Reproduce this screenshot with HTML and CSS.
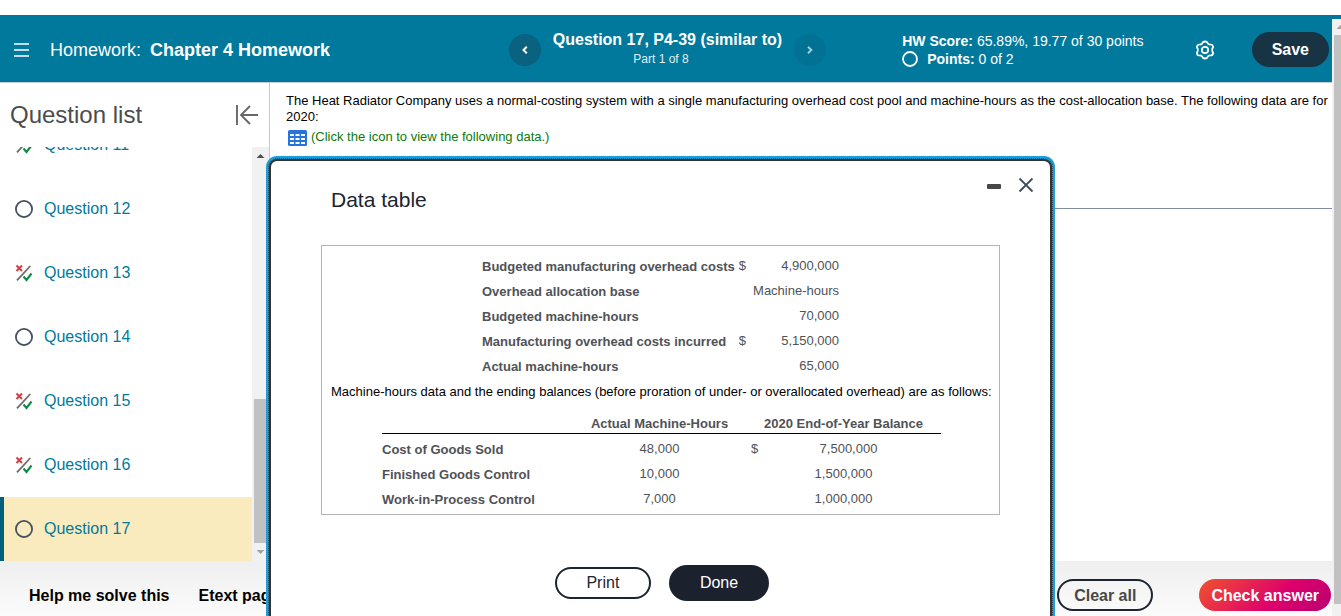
FILE: index.html
```
<!DOCTYPE html>
<html lang="en">
<head>
<meta charset="utf-8">
<title>Chapter 4 Homework</title>
<link rel="stylesheet" href="styles.css">
</head>
<body>
<svg class="sprite" aria-hidden="true">
  <symbol id="partial" viewBox="0 0 18 18">
    <path d="M1.500 1.500l5.500 5.500M7 1.500L1.500 7" stroke="#cc444a" stroke-width="2.100"/>
    <path d="M2 16.300L15.300 2" stroke="#6d6d6d" stroke-width="1.800"/>
    <path d="M8.500 12.500l3 3.500 5-6.500" fill="none" stroke="#118a45" stroke-width="2.100"/>
  </symbol>
  <symbol id="open" viewBox="0 0 18 18">
    <circle cx="9" cy="9" r="8.100" fill="none" stroke="#45505f" stroke-width="1.800"/>
  </symbol>
</svg>

<header class="topbar">
  <div class="topbar-left">
    <button class="icon-btn menu-btn" aria-label="Menu">
      <svg width="15" height="14" viewBox="0 0 15 14"><path d="M0 1h15M0 7h15M0 13h15" stroke="#fff" stroke-width="1.700"/></svg>
    </button>
    <h1 class="assignment">Homework: <strong>Chapter 4 Homework</strong></h1>
  </div>
  <nav class="question-nav">
    <button class="round-btn" aria-label="Previous question">
      <svg width="8" height="10" viewBox="0 0 8 10"><path d="M5.800 1.800L2.500 5l3.300 3.200" fill="none" stroke="#fff" stroke-width="2"/></svg>
    </button>
    <div class="question-title">
      <h2>Question 17, P4-39 (similar to)</h2>
      <p>Part 1 of 8</p>
    </div>
    <button class="round-btn round-btn-dim" aria-label="Next question">
      <svg width="8" height="10" viewBox="0 0 8 10"><path d="M2 1.800L5.300 5 2 8.200" fill="none" stroke="#a5cddc" stroke-width="1.900"/></svg>
    </button>
  </nav>
  <div class="topbar-right">
    <div class="score">
      <p><strong>HW Score:</strong> 65.89%, 19.77 of 30 points</p>
      <p class="points"><svg width="16" height="16" viewBox="0 0 16 16"><circle cx="8" cy="8" r="7" fill="none" stroke="#fff" stroke-width="1.800"/></svg><span><strong>Points:</strong> 0 of 2</span></p>
    </div>
    <button class="icon-btn settings-btn" aria-label="Settings">
      <svg width="20" height="20" viewBox="0 0 20 20" fill="none" stroke="#fff" stroke-width="1.700" stroke-linejoin="round"><path d="M7.600 2.500Q10 .5 12.400 2.500L13 3.800 14.600 4.600Q17.600 4 18.200 7L17.200 9V11L18.200 13Q17.600 16 14.600 15.400L13 16.200 12.400 17.500Q10 19.500 7.600 17.500L7 16.200 5.400 15.400Q2.400 16 1.800 13L2.800 11V9L1.800 7Q2.400 4 5.400 4.600L7 3.800Z"/><circle cx="10" cy="10" r="3.200"/></svg>
    </button>
    <button class="save-btn">Save</button>
  </div>
</header>

<div class="workspace">
  <aside class="sidebar">
    <div class="sidebar-head">
      <h2>Question list</h2>
      <button class="icon-btn" aria-label="Collapse question list">
        <svg width="24" height="22" viewBox="0 0 24 22"><path d="M2 1v20M23 11H6M15 2l-9 9 9 9" fill="none" stroke="#686868" stroke-width="1.900"/></svg>
      </button>
    </div>
    <div class="sidebar-body">
      <ul class="questions">
        <li><svg><use href="#partial"/></svg><a href="#q11">Question 11</a></li>
        <li><svg><use href="#open"/></svg><a href="#q12">Question 12</a></li>
        <li><svg><use href="#partial"/></svg><a href="#q13">Question 13</a></li>
        <li><svg><use href="#open"/></svg><a href="#q14">Question 14</a></li>
        <li><svg><use href="#partial"/></svg><a href="#q15">Question 15</a></li>
        <li><svg><use href="#partial"/></svg><a href="#q16">Question 16</a></li>
        <li class="current"><svg><use href="#open"/></svg><a href="#q17">Question 17</a></li>
      </ul>
      <div class="scrollbar" aria-hidden="true">
        <span class="arrow arrow-up"></span>
        <span class="track"><span class="thumb"></span></span>
        <span class="arrow arrow-down"></span>
      </div>
    </div>
  </aside>

  <main class="problem">
    <p>The Heat Radiator Company uses a normal-costing system with a single manufacturing overhead cost pool and machine-hours as the cost-allocation base. The following data are for 2020:</p>
    <a class="data-link" href="#data">
      <svg width="19" height="16" viewBox="0 0 19 16"><rect width="19" height="16" rx="1.500" fill="#2674d9"/><path d="M2 4h4v2H2zM7.500 4h4v2h-4zM13 4h4v2h-4zM2 8h4v2H2zM7.500 8h4v2h-4zM13 8h4v2h-4zM2 12h4v2H2zM7.500 12h4v2h-4zM13 12h4v2h-4z" fill="#fff"/></svg>
      <span>(Click the icon to view the following data.)</span>
    </a>
    <hr>
  </main>
</div>

<footer class="actions">
  <div class="help-links">
    <button class="text-btn">Help me solve this</button>
    <button class="text-btn">Etext pages</button>
  </div>
  <button class="clear-btn">Clear all</button>
  <button class="check-btn">Check answer</button>
</footer>

<section class="dialog" role="dialog" aria-labelledby="dialog-title">
  <div class="dialog-head">
    <h2 id="dialog-title">Data table</h2>
    <div class="dialog-tools">
      <button class="icon-btn" aria-label="Minimize"><svg width="14" height="16" viewBox="0 0 14 16"><rect y="7" width="14" height="5" rx="1" fill="#484848"/></svg></button>
      <button class="icon-btn" aria-label="Close"><svg width="16" height="16" viewBox="0 0 16 16"><path d="M1.500 1.500l13 13M14.500 1.500l-13 13" stroke="#3f4c5c" stroke-width="1.800"/></svg></button>
    </div>
  </div>
  <div class="data-box">
    <table class="costs">
      <tr><th scope="row">Budgeted manufacturing overhead costs</th><td class="currency">$</td><td>4,900,000</td></tr>
      <tr><th scope="row">Overhead allocation base</th><td></td><td>Machine-hours</td></tr>
      <tr><th scope="row">Budgeted machine-hours</th><td></td><td>70,000</td></tr>
      <tr><th scope="row">Manufacturing overhead costs incurred</th><td class="currency">$</td><td>5,150,000</td></tr>
      <tr><th scope="row">Actual machine-hours</th><td></td><td>65,000</td></tr>
    </table>
    <p>Machine-hours data and the ending balances (before proration of under- or overallocated overhead) are as follows:</p>
    <table class="balances">
      <colgroup><col class="col-account"><col class="col-hours"><col class="col-currency"><col></colgroup>
      <thead>
        <tr><td></td><th scope="col">Actual Machine-Hours</th><th scope="col" colspan="2">2020 End-of-Year Balance</th></tr>
      </thead>
      <tbody>
        <tr><th scope="row">Cost of Goods Sold</th><td>48,000</td><td class="currency">$</td><td>7,500,000</td></tr>
        <tr><th scope="row">Finished Goods Control</th><td>10,000</td><td colspan="2">1,500,000</td></tr>
        <tr><th scope="row">Work-in-Process Control</th><td>7,000</td><td colspan="2">1,000,000</td></tr>
      </tbody>
    </table>
  </div>
  <div class="dialog-actions">
    <button class="print-btn">Print</button>
    <button class="done-btn">Done</button>
  </div>
</section>

<div class="scrollbar page-scrollbar" aria-hidden="true">
  <span class="arrow arrow-up"></span>
  <span class="track"><span class="thumb"></span></span>
</div>
</body>
</html>
```
FILE: styles.css
```
* {
  box-sizing: border-box;
}

body {
  position: relative;
  display: flex;
  flex-direction: column;
  height: 100vh;
  margin: 0;
  padding-top: 15px;
  overflow: hidden;
  background: #fff;
  color: #000;
  font-family: "Liberation Sans", Arial, sans-serif;
  font-size: 13px;
  line-height: 16px;
}

h1, h2, p, ul {
  margin: 0;
  padding: 0;
}

svg {
  display: block;
  flex: none;
}

button {
  font-family: inherit;
  font-size: 16px;
  line-height: 20px;
  cursor: pointer;
}

.sprite {
  position: absolute;
  width: 0;
  height: 0;
}

.icon-btn {
  padding: 0;
  border: 0;
  background: none;
}

/* Top bar */

.topbar {
  display: grid;
  grid-template-columns: 1fr auto 1fr;
  align-items: center;
  flex: none;
  height: 68px;
  padding: 2px 12px 0 6px;
  border-bottom: 1px solid #c5ccd6;
  background: #00799c;
  color: #fff;
}

.topbar-left {
  display: flex;
  align-items: center;
}

.menu-btn {
  padding: 8px;
}

.assignment {
  margin-left: 13px;
  font-size: 18px;
  font-weight: normal;
  line-height: 20px;
}

.assignment strong {
  margin-left: 4px;
}

.question-nav {
  display: flex;
  align-items: center;
  gap: 12px;
}

.round-btn {
  display: flex;
  align-items: center;
  justify-content: center;
  width: 32px;
  height: 32px;
  padding: 0;
  border: 0;
  border-radius: 50%;
  background: #0a6180;
}

.round-btn-dim {
  background: #027294;
}

.question-title {
  padding-bottom: 2px;
  text-align: center;
}

.question-title h2 {
  font-size: 16px;
  line-height: 20px;
}

.question-title p {
  padding-right: 13px;
  color: #e2eff4;
  font-size: 12px;
  line-height: 18px;
}

.topbar-right {
  display: flex;
  align-items: center;
  padding-left: 76px;
}

.score {
  flex: 1;
  font-size: 14px;
  line-height: 18px;
}

.points {
  display: flex;
  align-items: center;
  gap: 9px;
}

.settings-btn {
  margin-right: 37px;
}

.save-btn {
  height: 35px;
  padding: 0 20px;
  border: 0;
  border-radius: 18px;
  background: #173344;
  color: #fff;
  font-weight: bold;
}

/* Workspace */

.workspace {
  display: flex;
  flex: 1;
  min-height: 0;
}

.sidebar {
  display: flex;
  flex-direction: column;
  flex: none;
  width: 270px;
  border-right: 1px solid #c8c8d4;
}

.sidebar-head {
  display: flex;
  align-items: center;
  justify-content: space-between;
  flex: none;
  height: 64px;
  padding: 0 10px;
}

.sidebar-head h2 {
  color: #4c4c4c;
  font-size: 24px;
  font-weight: normal;
  line-height: 28px;
}

.sidebar-body {
  display: flex;
  flex: 1;
  min-height: 0;
}

.questions {
  display: flex;
  flex: 1;
  flex-direction: column;
  justify-content: flex-end;
  overflow: hidden;
  list-style: none;
}

.questions li {
  display: flex;
  align-items: center;
  flex: none;
  gap: 11px;
  height: 64px;
  padding-left: 11px;
  border-left: 4px solid transparent;
}

.questions .current {
  border-color: #00617c;
  background: #f9ebbd;
}

.questions svg {
  width: 18px;
  height: 18px;
}

.questions a {
  color: #007a9c;
  font-size: 16px;
  line-height: 20px;
  text-decoration: none;
}

.scrollbar {
  display: flex;
  flex-direction: column;
  align-items: center;
  width: 17px;
  background: #f1f1f1;
}

.arrow {
  flex: none;
  width: 8px;
  height: 4px;
  margin: 7px 0;
}

.arrow-up {
  background: #505050;
  clip-path: polygon(50% 0, 100% 100%, 0 100%);
}

.arrow-down {
  background: #a3a3a3;
  clip-path: polygon(0 0, 100% 0, 50% 100%);
}

.track {
  display: flex;
  flex: 1;
  flex-direction: column;
  justify-content: flex-end;
  width: 13px;
}

.thumb {
  height: 38%;
  background: #c1c1c1;
}

.page-scrollbar {
  position: absolute;
  top: 19px;
  right: -8px;
  bottom: 0;
}

.page-scrollbar .arrow-up {
  background: #a3a3a3;
  margin: 6px 0;
}

.page-scrollbar .track {
  justify-content: flex-start;
}

.page-scrollbar .thumb {
  height: 98%;
}

.problem {
  flex: 1;
  min-width: 0;
  margin-right: 9px;
  padding-top: 10px;
}

.problem p {
  padding-left: 16px;
}

.data-link {
  display: flex;
  gap: 4px;
  padding: 4px 0 0 18px;
  color: #0b7a0b;
  text-decoration: none;
}

.data-link svg {
  margin-top: 1px;
}

.problem hr {
  margin: 62px 0 0;
  border: 0;
  border-top: 1px solid #838da0;
}

/* Bottom bar */

.actions {
  display: flex;
  align-items: flex-start;
  flex: none;
  height: 55px;
  padding: 18px 10px 0 29px;
  background: linear-gradient(#efefef, #fbfbfb);
}

.actions button {
  height: 32px;
  padding-top: 2px;
  padding-bottom: 0;
  font-weight: bold;
}

.help-links {
  display: flex;
  flex: 1;
  gap: 29px;
}

.text-btn {
  padding: 0;
  border: 0;
  background: none;
  color: #000;
}

.clear-btn {
  margin-right: 46px;
  padding: 0 15px;
  border: 2px solid #1c2431;
  border-radius: 16px;
  background: transparent;
  color: #484848;
}

.check-btn {
  padding: 0 12px;
  border: 0;
  border-radius: 16px;
  background: linear-gradient(135deg, #f0532d, #de006c 60%, #b80071);
  color: #fff;
}

/* Dialog */

.dialog {
  position: absolute;
  top: 159px;
  left: 269px;
  width: 783px;
  padding: 15px 50px 24px;
  border: 2px solid #333;
  border-radius: 8px;
  outline: 1px dotted #2f4754;
  background: #fff;
  box-shadow: 0 0 0 3px #1f9cdb;
}

.dialog-head {
  display: flex;
  justify-content: space-between;
  padding-left: 10px;
}

.dialog-head h2 {
  padding-top: 10px;
  color: #1c2431;
  font-size: 21px;
  font-weight: normal;
  line-height: 28px;
}

.dialog-tools {
  display: flex;
  align-items: flex-start;
  gap: 17px;
  margin: 1px -34px 0 0;
}

.data-box {
  margin-top: 31px;
  padding: 7px 0 3px 9px;
  border: 1px solid #b4b4b4;
  color: #000;
}

.data-box p {
  margin-top: 6px;
}

.data-box table {
  border-collapse: collapse;
  color: #505257;
}

.data-box th {
  padding: 2px 0 0;
}

.data-box td {
  padding: 0;
}

.data-box tr {
  height: 25px;
}

.costs {
  margin-left: 151px;
}

.costs th {
  padding-right: 4px;
  text-align: left;
  white-space: nowrap;
}

.costs td {
  text-align: right;
}

.costs td:last-child {
  width: 93px;
}

.data-box .currency {
  text-align: left;
}

.balances {
  width: 559px;
  margin: 11px 0 0 51px;
  table-layout: fixed;
  text-align: center;
}

.col-account {
  width: 191px;
}

.col-hours {
  width: 173px;
}

.col-currency {
  width: 10px;
}

.balances thead {
  border-bottom: 1px solid #000;
}

.balances thead tr {
  height: 22px;
}

.balances thead th {
  padding-top: 4px;
}

.balances tbody th {
  text-align: left;
}

.balances tbody tr:first-child {
  height: 28px;
}

.balances tbody tr:first-child td {
  padding-top: 3px;
}

.balances tbody tr:first-child th {
  padding-top: 5px;
}

.balances .currency {
  padding-left: 5px;
}

.dialog-actions {
  display: flex;
  align-items: center;
  justify-content: center;
  gap: 18px;
  padding: 50px 0 0 3px;
}

.print-btn {
  min-width: 96px;
  height: 32px;
  padding: 0 28px;
  border: 2px solid #1c2431;
  border-radius: 16px;
  background: #fff;
  color: #1c2431;
}

.done-btn {
  height: 36px;
  padding: 0 31px;
  border: 0;
  border-radius: 18px;
  background: #1c212e;
  color: #fff;
}
```
